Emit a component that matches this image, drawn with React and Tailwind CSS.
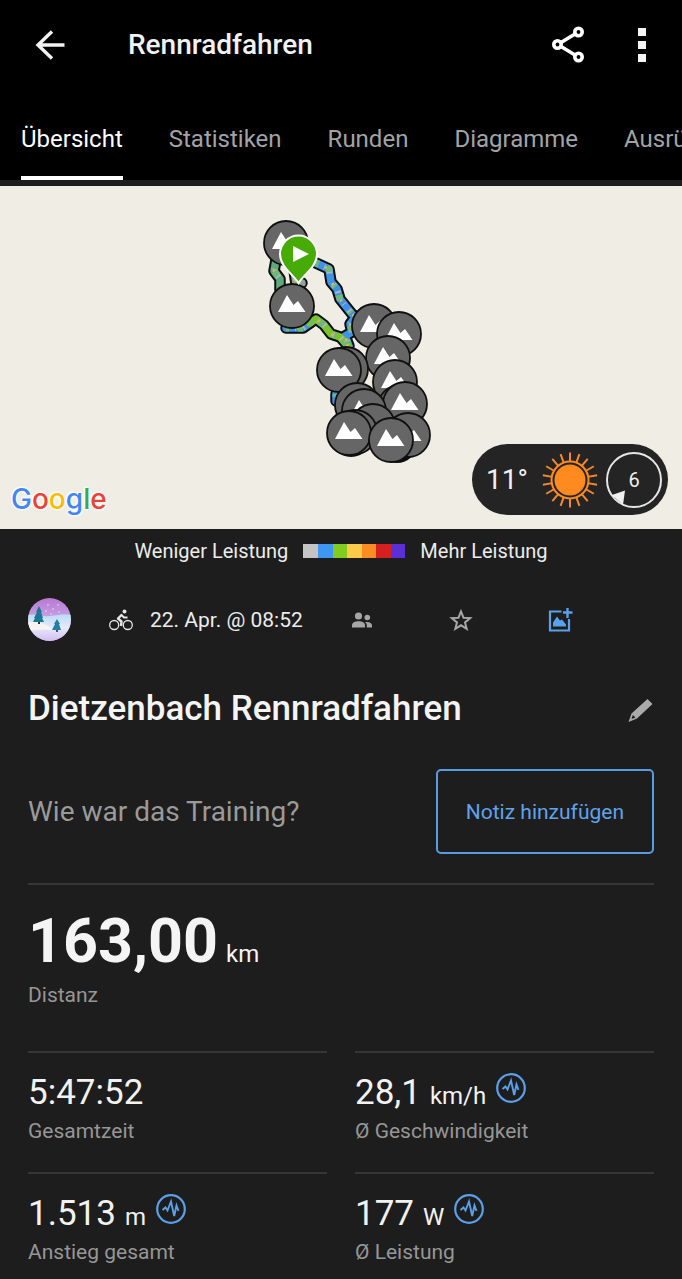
const TABS = ["Übersicht", "Statistiken", "Runden", "Diagramme", "Ausrüstung"];

const LEGEND = [
  "bg-[#c4c4c4]",
  "bg-[#3f97f2]",
  "bg-[#80cc1f]",
  "bg-[#fccb4a]",
  "bg-[#fb8c24]",
  "bg-[#d61f1f]",
  "bg-[#5a30d6]",
];

const CLIMBS = [
  [286, 57],
  [292, 120],
  [374, 140],
  [399, 148],
  [388, 172],
  [395, 196],
  [400, 221],
  [405, 218],
  [346, 183],
  [339, 184],
  [357, 219],
  [364, 225],
  [373, 240],
  [408, 249],
  [355, 246],
  [349, 247],
  [391, 254],
];

const STATS = [
  { value: "5:47:52", label: "Gesamtzeit" },
  { value: "28,1", unit: "km/h", label: "Ø Geschwindigkeit", chart: true },
  { value: "1.513", unit: "m", label: "Anstieg gesamt", chart: true },
  { value: "177", unit: "W", label: "Ø Leistung", chart: true },
];

const ROUTES = [
  { d: "M276 74L274 85L280 93L280 104", color: "#5faa7c" },
  { d: "M294 84L296 98L302 97", color: "#8fa3a0" },
  { d: "M316 77L329 83L331 96L337 103L340 113L352 128L359 134", color: "#3f92e8" },
  { d: "M356 130L350 138L352 146L345 150L349 160", color: "#3f92e8" },
  { d: "M286 142L303 142L310 137", color: "#3f92e8" },
  { d: "M310 137L316 133L324 139L331 148L340 151L348 160", color: "#78c42a" },
  { d: "M336 208L336 215", color: "#3f92e8" },
];

function Header() {
  return (
    <header className="bg-black">
      <div className="flex h-[90px] items-center pl-7 pr-5">
        <button aria-label="Zurück" className="flex size-11 items-center justify-center">
          <svg viewBox="0 0 32 32" className="size-8" fill="none" stroke="#f2f2f2" strokeWidth="3.4">
            <path d="M30.500 16H4M18 2.500L4 16l14 13.500" />
          </svg>
        </button>
        <h1 className="ml-14 flex-1 text-[28px] leading-8 font-medium text-[#f2f2f2]">Rennradfahren</h1>
        <button aria-label="Teilen" className="flex size-11 items-center justify-center">
          <svg viewBox="0 0 36 38" className="h-[38px] w-9" fill="none" stroke="#fff" strokeWidth="3.600">
            <circle cx="7.500" cy="18.500" r="3.700" />
            <circle cx="28.500" cy="6" r="3.700" />
            <circle cx="28.500" cy="31" r="3.700" />
            <path d="M11 16.500L25 8M11 20.500l14 8.500" />
          </svg>
        </button>
        <button aria-label="Mehr" className="ml-8 flex h-11 w-10 flex-col items-center justify-center gap-[5px]">
          <span className="size-2 bg-[#f4f4f4]" />
          <span className="size-2 bg-[#f4f4f4]" />
          <span className="size-2 bg-[#f4f4f4]" />
        </button>
      </div>
      <nav className="flex h-[90px] gap-[46px] overflow-hidden pl-[21px]">
        {TABS.map((t, i) => (
          <a
            key={t}
            href="#"
            className={
              i === 0
                ? "flex shrink-0 items-center border-b-4 border-white pt-3 text-2xl text-white"
                : "flex shrink-0 items-center border-b-4 border-transparent pt-3 text-2xl text-[#a3a3a3]"
            }
          >
            {t}
          </a>
        ))}
      </nav>
    </header>
  );
}

function MapDrawing() {
  return (
    <svg viewBox="0 0 682 343" preserveAspectRatio="xMidYMid slice" className="block size-full" aria-hidden="true">
      <g fill="none" strokeLinejoin="round">
        {ROUTES.map(({ d }) => (
          <path key={d} d={d} stroke="#0b0f12" strokeWidth="11.500" strokeLinecap="round" />
        ))}
        {ROUTES.map(({ d, color }) => (
          <path key={d} d={d} stroke={color} strokeWidth="7.500" strokeLinecap="round" />
        ))}
        {ROUTES.map(({ d }) => (
          <path key={d} d={d} stroke="#6fb878" strokeWidth="7" strokeDasharray="3 9 5 14" />
        ))}
        {ROUTES.map(({ d }) => (
          <path key={d} d={d} stroke="#a9b6b5" strokeWidth="6" strokeDasharray="2 12 1 7" strokeDashoffset="5" />
        ))}
        {ROUTES.map(({ d }) => (
          <path key={d} d={d} stroke="#d8b45c" strokeWidth="3" strokeDasharray="2 17" strokeDashoffset="9" />
        ))}
      </g>
      <g fill="#0e0e0e">
        <circle cx="351" cy="249" r="22" />
        <circle cx="397" cy="257" r="20" />
      </g>
      {CLIMBS.map(([x, y]) => (
        <g key={`${x}-${y}`} transform={`translate(${x} ${y})`}>
          <circle r="22" fill="#666" stroke="#101010" strokeWidth="1.800" />
          <path d="M-14 6L-5 -11L1.500 -1L6 -5L13.500 6Z" fill="#fff" />
        </g>
      ))}
      <path
        d="M298.500 97C293 88 280 81 280 68A18.500 18.500 0 0 1 317 68C317 81 304 88 298.500 97Z"
        fill="#46ac05"
        stroke="#fff"
        strokeWidth="2"
      />
      <path d="M293 60v16l16-8z" fill="#fff" />
    </svg>
  );
}

function Sun() {
  const rays = Array.from({ length: 18 }, (_, i) => i * 20);
  return (
    <svg viewBox="-28 -28 56 56" className="size-14" aria-hidden="true">
      <circle r="15.500" fill="#ff8a1f" />
      <circle r="18.500" fill="none" stroke="#ff8a1f" strokeWidth="2" />
      {rays.map((a) => (
        <path key={a} d="M0 -18V-27.500" stroke="#f58a28" strokeWidth="2" transform={`rotate(${a})`} />
      ))}
    </svg>
  );
}

function Weather() {
  return (
    <div className="absolute right-[14px] bottom-[14px] flex h-[71px] items-center rounded-full bg-[#242424] pr-[6px] pl-[14px]">
      <span className="w-14 text-[28px] leading-8 text-[#f0f0f0]">11°</span>
      <Sun />
      <span className="relative ml-2 flex size-[56px] items-center justify-center text-xl text-[#f0f0f0]">
        <svg viewBox="-28 -28 56 56" className="absolute inset-0 size-full" aria-hidden="true">
          <circle r="27" fill="none" stroke="#e4e6e8" strokeWidth="2" />
          <path d="M-22 15L-9 10.500L-11 25Z" fill="#f0f0f0" />
        </svg>
        <span className="relative">6</span>
      </span>
    </div>
  );
}

function GoogleMark() {
  return (
    <div className="absolute bottom-[10px] left-[11px] font-[Inter,sans-serif] text-[28px] leading-10 font-medium [text-shadow:0_0_2px_#fff,0_0_3px_#fff,1px_1px_2px_#fff,-1px_-1px_2px_#fff]">
      <span className="text-[#4285f4]">G</span>
      <span className="text-[#ea4335]">o</span>
      <span className="text-[#fbbc05]">o</span>
      <span className="text-[#4285f4]">g</span>
      <span className="text-[#34a853]">l</span>
      <span className="text-[#ea4335]">e</span>
    </div>
  );
}

function Legend() {
  return (
    <div className="flex items-center justify-center gap-[15px] pt-2 text-xl leading-7 text-[#ececec]">
      <span>Weniger Leistung</span>
      <span className="flex h-[14px] w-[102px]">
        {LEGEND.map((c) => (
          <span key={c} className={`flex-1 ${c}`} />
        ))}
      </span>
      <span>Mehr Leistung</span>
    </div>
  );
}

function Avatar() {
  return (
    <svg viewBox="0 0 43 43" className="size-[43px] shrink-0" role="img" aria-label="Profilbild">
      <defs>
        <clipPath id="avatar-clip">
          <circle cx="21.500" cy="21.500" r="21.500" />
        </clipPath>
        <linearGradient id="avatar-sky" x1="0" y1="0" x2="0" y2="1">
          <stop offset="0" stopColor="#b878d0" />
          <stop offset="0.450" stopColor="#c7a0e4" />
        </linearGradient>
        <linearGradient id="avatar-snow" x1="0" y1="0" x2="0" y2="1">
          <stop offset="0" stopColor="#b5dcf5" />
          <stop offset="0.500" stopColor="#e9e8fb" />
          <stop offset="1" stopColor="#d2bdf2" />
        </linearGradient>
      </defs>
      <g clipPath="url(#avatar-clip)">
        <path d="M0 0h43v43H0z" fill="url(#avatar-sky)" />
        <path d="M0 17c8-2 14 2 22 1s14-3 21-1v26H0z" fill="url(#avatar-snow)" />
        <path d="M0 24c10-2 18 2 27 9-9-3-18-1-27 0z" fill="#fbf8ef" opacity=".8" />
        <path d="M11 8l-3 6h1l-3 6h1l-2 4h11l-2-4h1l-2-6h1z" fill="#1c7795" />
        <path d="M10 24h2v2h-2z" fill="#333" />
        <path d="M29 21l-3 5h1l-2 4-1 2h9l-2-6h1z" fill="#2380a4" />
        <path d="M28 32h2v2h-2z" fill="#40566f" />
        <g fill="#f2ddff">
          <circle cx="20" cy="7" r=".8" />
          <circle cx="25" cy="11" r=".8" />
          <circle cx="30" cy="7" r=".8" />
          <circle cx="18" cy="13" r=".8" />
          <circle cx="31" cy="14" r=".7" />
          <circle cx="23" cy="16" r=".7" />
        </g>
      </g>
    </svg>
  );
}

function MetaRow() {
  return (
    <div className="mt-[33px] flex items-center">
      <Avatar />
      <svg viewBox="0 0 24 22" className="ml-[38px] h-[22px] w-6 shrink-0" fill="none" stroke="#e6e6e6" aria-hidden="true">
        <circle cx="5.200" cy="16" r="4.500" strokeWidth="1.300" />
        <circle cx="18.800" cy="16" r="4.500" strokeWidth="1.300" />
        <circle cx="15.500" cy="2.500" r="2" fill="#e6e6e6" stroke="none" />
        <path d="M13 5.500L9 9.500L12.500 12.500L12 17" strokeWidth="2.400" strokeLinejoin="round" />
        <path d="M12 5.500L15 8.500H18.500" strokeWidth="1.900" />
      </svg>
      <time className="ml-[17px] shrink-0 text-[21px] leading-8 text-[#ececec]">22. Apr. @ 08:52</time>
      <div className="ml-[47px] flex items-center gap-[75px] text-[#a6a6a6]">
        <button aria-label="Teilnehmer">
          <svg viewBox="0 0 24 24" className="size-6" fill="currentColor">
            <circle cx="8.500" cy="8" r="3.600" />
            <path d="M2 19.500v-2c0-3 3-4.300 6.500-4.300s6.500 1.300 6.500 4.300v2z" />
            <circle cx="17.300" cy="9.500" r="2.800" />
            <path d="M16.800 19.500v-2.200c0-1.300-.7-2.400-1.800-3.200 3.800-.7 7 .5 7 3.400v2z" />
          </svg>
        </button>
        <button aria-label="Favorit">
          <svg viewBox="0 0 24 24" className="size-6" fill="none" stroke="currentColor" strokeWidth="2" strokeLinejoin="miter">
            <path d="M12 3.500l2.500 6.200 6.700.4-5.200 4.300 1.700 6.500-5.700-3.600-5.700 3.600L8 14.400 2.800 10.100l6.700-.4z" />
          </svg>
        </button>
        <button aria-label="Foto hinzufügen" className="text-[#5aa0ea]">
          <svg viewBox="0 0 25 26" className="h-[26px] w-[25px]" fill="none" stroke="currentColor" strokeWidth="2.200">
            <path d="M13.500 4.500H2v19h19V12" />
            <path d="M19.500 1v10M15 5.500h9.500" strokeWidth="2.400" />
            <path d="M5 19.500v-4l4-6 3 4 2-1 4 5v2z" fill="currentColor" stroke="none" />
          </svg>
        </button>
      </div>
    </div>
  );
}

function PulseIcon() {
  return (
    <svg viewBox="0 0 30 30" className="size-[30px]" fill="none" stroke="#5aa0ea" aria-hidden="true">
      <circle cx="15" cy="15" r="13.800" strokeWidth="2.200" />
      <path d="M6.500 16L9.500 13.500L11.500 16.500L15 7.500L18.200 22L20.500 11.500L22.500 17" strokeWidth="1.900" />
    </svg>
  );
}

function Stat({ value, unit, label, chart }) {
  return (
    <div className="border-t-2 border-[#363636] pt-5 pb-[27px]">
      <div className="flex h-10 items-baseline text-[35px] leading-10 text-[#f2f2f2]">
        <span>{value}</span>
        {unit && <span className="ml-[9px] text-2xl">{unit}</span>}
        {chart && (
          <button aria-label={`Diagramm ${label}`} className="ml-[10px] self-start">
            <PulseIcon />
          </button>
        )}
      </div>
      <div className="mt-1 text-[21px] leading-7 text-[#969696]">{label}</div>
    </div>
  );
}

export default function App() {
  return (
    <div className="min-h-screen bg-[#1d1d1d] font-[Roboto,sans-serif]">
      <Header />
      <section aria-label="Karte" className="relative mt-[6px] h-[343px] overflow-hidden bg-[#efede4]">
        <MapDrawing />
        <GoogleMark />
        <Weather />
      </section>
      <Legend />
      <main className="px-7">
        <MetaRow />
        <div className="mt-[46px] flex items-center justify-between">
          <h2 className="text-[35px] leading-11 font-medium text-[#f4f4f4]">Dietzenbach Rennradfahren</h2>
          <button aria-label="Titel bearbeiten">
            <svg viewBox="0 0 26 26" className="size-[26px]" fill="#aaa">
              <path d="M19.500 3l5 5L9 22.500L.500 26L3.500 17.500zM4.800 19L3.500 23L7.500 21.500z" fillRule="evenodd" />
            </svg>
          </button>
        </div>
        <div className="mt-[38px] flex items-center justify-between border-b-2 border-[#363636] pb-[29px]">
          <p className="text-[28px] leading-9 text-[#9a9a9a]">Wie war das Training?</p>
          <button className="h-[85px] rounded-[5px] border-2 border-[#5a9ce2] px-7 text-[21px] leading-7 text-[#5fa3ec]">
            Notiz hinzufügen
          </button>
        </div>
        <div className="pt-5 pb-[42px]">
          <div className="text-[#f4f4f4]">
            <span className="text-[61px] leading-[72px] font-bold">163,00</span>
            <span className="ml-2 text-2xl">km</span>
          </div>
          <div className="mt-1 text-[21px] leading-7 text-[#969696]">Distanz</div>
        </div>
        <div className="grid grid-cols-2 gap-x-7">
          {STATS.map((s) => (
            <Stat key={s.label} {...s} />
          ))}
        </div>
      </main>
    </div>
  );
}
